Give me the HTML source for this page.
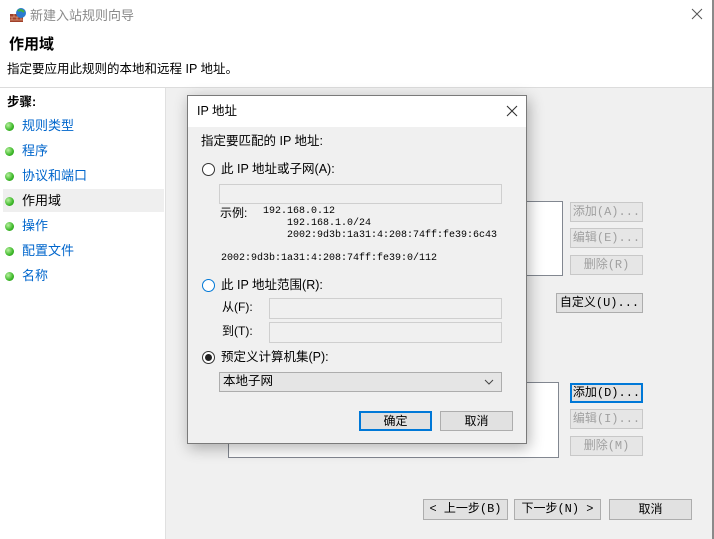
<!DOCTYPE html>
<html><head><meta charset="utf-8"><style>
*{margin:0;padding:0;box-sizing:border-box}
body{width:714px;height:539px;overflow:hidden;background:#fff;font-family:"Liberation Sans","Noto Sans CJK SC",sans-serif;font-size:12px;color:#000;position:relative;line-height:1.2}
.a{position:absolute;white-space:nowrap}
.mono{font-family:"Liberation Mono","Noto Sans CJK SC",monospace;font-size:11px}
.ex{font-family:"Liberation Mono",monospace;font-size:10px}
.btn{position:absolute;background:#e1e1e1;border:1px solid #adadad;text-align:center;font-size:12px;line-height:18px}
.dis{color:#a0a0a0;background:#e6e6e6;border-color:#c8c8c8}
.dot{position:absolute;width:9px;height:9px;border-radius:50%;background:radial-gradient(circle at 35% 35%,#b8f0a0,#3cb828 60%,#2a8a1a)}
.lk{color:#0066cc;font-size:13px}
.radio{position:absolute;width:13px;height:13px;border:1px solid #333;border-radius:50%;background:#fff}
.inp{position:absolute;border:1px solid #cfcfcf;background:#f0f0f0}
</style></head><body>
<div class="a" style="left:712px;top:0;width:2px;height:539px;background:#8a8a8a"></div>
<svg class="a" style="left:9px;top:7px" width="18" height="16"><rect x="1" y="7" width="13" height="8" fill="#a0402a"/><path d="M1 10h13M1 13h13M5 7v3M10 7v3M3 10v3M8 10v3M12 10v3" stroke="#e0a080" stroke-width="0.8"/><circle cx="12" cy="6" r="5" fill="#2a7ad0"/><path d="M9 4q3 -2 6 1" stroke="#40b040" stroke-width="2" fill="none"/></svg>
<div class="a" style="left:30px;top:8px;font-size:13px;color:#8a8a8a">新建入站规则向导</div>
<svg class="a" style="left:691px;top:8px" width="12" height="12"><path d="M1 1l10 10M11 1L1 11" stroke="#555" stroke-width="1"/></svg>
<div class="a" style="left:9px;top:36px;font-size:15px;font-weight:bold">作用域</div>
<div class="a" style="left:7px;top:62px;font-size:12.5px">指定要应用此规则的本地和远程 IP 地址。</div>
<div class="a" style="left:0;top:87px;width:712px;height:1px;background:#dcdcdc"></div>
<div class="a" style="left:166px;top:88px;width:546px;height:451px;background:#f0f0f0"></div>
<div class="a" style="left:165px;top:88px;width:1px;height:451px;background:#e0e0e0"></div>
<div class="a" style="left:7px;top:95px;font-size:12.5px;font-weight:bold">步骤:</div>
<div class="a" style="left:3px;top:189px;width:161px;height:23px;background:#efefef"></div>
<div class="dot" style="left:5px;top:122px"></div><div class="a lk" style="left:22px;top:118px">规则类型</div>
<div class="dot" style="left:5px;top:147px"></div><div class="a lk" style="left:22px;top:143px">程序</div>
<div class="dot" style="left:5px;top:172px"></div><div class="a lk" style="left:22px;top:168px">协议和端口</div>
<div class="dot" style="left:5px;top:197px"></div><div class="a" style="left:22px;top:193px;font-size:13px">作用域</div>
<div class="dot" style="left:5px;top:222px"></div><div class="a lk" style="left:22px;top:218px">操作</div>
<div class="dot" style="left:5px;top:247px"></div><div class="a lk" style="left:22px;top:243px">配置文件</div>
<div class="dot" style="left:5px;top:272px"></div><div class="a lk" style="left:22px;top:268px">名称</div>
<div class="a" style="left:228px;top:201px;width:335px;height:75px;background:#fff;border:1px solid #828790"></div>
<div class="a" style="left:228px;top:382px;width:331px;height:76px;background:#fff;border:1px solid #828790"></div>
<div class="btn dis mono" style="left:570px;top:202px;width:73px;height:20px">添加(A)...</div>
<div class="btn dis mono" style="left:570px;top:228px;width:73px;height:20px">编辑(E)...</div>
<div class="btn dis mono" style="left:570px;top:255px;width:73px;height:20px">删除(R)</div>
<div class="btn mono" style="left:556px;top:293px;width:87px;height:20px">自定义(U)...</div>
<div class="btn mono" style="left:570px;top:383px;width:73px;height:20px;border:2px solid #0078d7;line-height:16px">添加(D)...</div>
<div class="btn dis mono" style="left:570px;top:409px;width:73px;height:20px">编辑(I)...</div>
<div class="btn dis mono" style="left:570px;top:436px;width:73px;height:20px">删除(M)</div>
<div class="btn mono" style="left:423px;top:499px;width:85px;height:21px">&lt; 上一步(B)</div>
<div class="btn mono" style="left:514px;top:499px;width:87px;height:21px">下一步(N) &gt;</div>
<div class="btn" style="left:609px;top:499px;width:83px;height:21px">取消</div>
<div class="a" style="left:187px;top:95px;width:340px;height:349px;background:#f0f0f0;border:1px solid #7a7a7a;box-shadow:2px 4px 14px rgba(0,0,0,0.3)">
 <div class="a" style="left:0;top:0;width:338px;height:31px;background:#fff"></div>
 <div class="a" style="left:9px;top:8px;font-size:12.5px">IP 地址</div>
 <svg class="a" style="left:318px;top:9px" width="12" height="12"><path d="M1 1l10 10M11 1L1 11" stroke="#333" stroke-width="1.1"/></svg>
 <div class="a" style="left:13px;top:38px;font-size:12.5px">指定要匹配的 IP 地址:</div>
 <div class="radio" style="left:14px;top:67px"></div>
 <div class="a" style="left:33px;top:66px;font-size:12.5px">此 IP 地址或子网(A):</div>
 <div class="inp" style="left:31px;top:88px;width:283px;height:20px"></div>
 <div class="a" style="left:32px;top:110px;font-size:12px">示例:</div>
 <div class="a ex" style="left:75px;top:110px">192.168.0.12</div>
 <div class="a ex" style="left:99px;top:122px">192.168.1.0/24</div>
 <div class="a ex" style="left:99px;top:134px">2002:9d3b:1a31:4:208:74ff:fe39:6c43</div>
 <div class="a ex" style="left:33px;top:157px">2002:9d3b:1a31:4:208:74ff:fe39:0/112</div>
 <div class="radio" style="left:14px;top:183px;border-color:#0078d7"></div>
 <div class="a" style="left:33px;top:182px;font-size:12.5px">此 IP 地址范围(R):</div>
 <div class="a" style="left:34px;top:204px;font-size:12px">从(F):</div>
 <div class="inp" style="left:81px;top:202px;width:233px;height:21px"></div>
 <div class="a" style="left:34px;top:228px;font-size:12px">到(T):</div>
 <div class="inp" style="left:81px;top:226px;width:233px;height:21px"></div>
 <div class="radio" style="left:14px;top:255px"><div class="a" style="left:2px;top:2px;width:7px;height:7px;border-radius:50%;background:#222"></div></div>
 <div class="a" style="left:33px;top:254px;font-size:12.5px">预定义计算机集(P):</div>
 <div class="a" style="left:31px;top:276px;width:283px;height:20px;background:#e5e5e5;border:1px solid #adadad"></div>
 <div class="a" style="left:35px;top:278px;font-size:12.5px">本地子网</div>
 <svg class="a" style="left:296px;top:283px" width="10" height="6"><path d="M1 1l4 4 4-4" stroke="#444" fill="none"/></svg>
 <div class="btn" style="left:171px;top:315px;width:73px;height:20px;border:2px solid #0078d7;line-height:16px">确定</div>
 <div class="btn" style="left:252px;top:315px;width:73px;height:20px">取消</div>
</div>
</body></html>
